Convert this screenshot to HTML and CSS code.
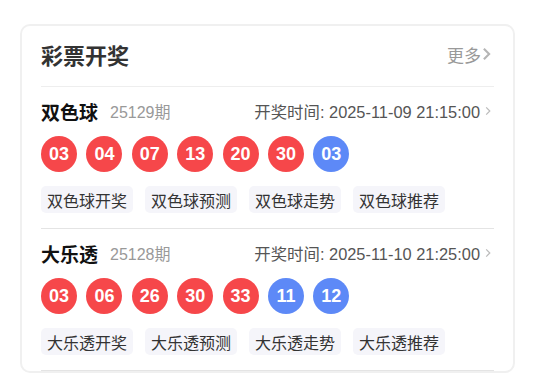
FILE: index.html
```html
<!DOCTYPE html>
<html lang="zh">
<head>
<meta charset="UTF-8">
<title>彩票开奖</title>
<link rel="stylesheet" href="styles.css">
</head>
<body>
  <section class="tarjeta">
    <div class="cabecera">
      <h2 class="titulo">彩票开奖</h2>
      <a class="mas">更多<svg class="flecha" viewBox="0 0 10 16" width="9" height="14"><path d="M2 2l6 6-6 6" fill="none" stroke="#b5b5b5" stroke-width="2.4"/></svg></a>
    </div>

    <div class="sorteo">
      <div class="fila">
        <span class="nombre">双色球</span>
        <span class="numero">25129期</span>
        <span class="hora">开奖时间: 2025-11-09 21:15:00<svg class="flecha-peq" viewBox="0 0 10 16" width="6" height="10"><path d="M2 2l6 6-6 6" fill="none" stroke="#bbb" stroke-width="2"/></svg></span>
      </div>
      <div class="bolas">
        <span class="bola roja">03</span>
        <span class="bola roja">04</span>
        <span class="bola roja">07</span>
        <span class="bola roja">13</span>
        <span class="bola roja">20</span>
        <span class="bola roja">30</span>
        <span class="bola azul">03</span>
      </div>
      <div class="etiquetas">
        <span class="etiqueta">双色球开奖</span>
        <span class="etiqueta">双色球预测</span>
        <span class="etiqueta">双色球走势</span>
        <span class="etiqueta">双色球推荐</span>
      </div>
    </div>

    <div class="sorteo">
      <div class="fila">
        <span class="nombre">大乐透</span>
        <span class="numero">25128期</span>
        <span class="hora">开奖时间: 2025-11-10 21:25:00<svg class="flecha-peq" viewBox="0 0 10 16" width="6" height="10"><path d="M2 2l6 6-6 6" fill="none" stroke="#bbb" stroke-width="2"/></svg></span>
      </div>
      <div class="bolas">
        <span class="bola roja">03</span>
        <span class="bola roja">06</span>
        <span class="bola roja">26</span>
        <span class="bola roja">30</span>
        <span class="bola roja">33</span>
        <span class="bola azul">11</span>
        <span class="bola azul">12</span>
      </div>
      <div class="etiquetas">
        <span class="etiqueta">大乐透开奖</span>
        <span class="etiqueta">大乐透预测</span>
        <span class="etiqueta">大乐透走势</span>
        <span class="etiqueta">大乐透推荐</span>
      </div>
    </div>
  </section>
</body>
</html>
```

FILE: styles.css
```css
* {
  padding: 0;
  margin: 0;
  box-sizing: border-box;
}

body {
  background: #fff;
  font-family: "Liberation Sans", "Noto Sans CJK SC", sans-serif;
  padding: 24px 0 0 20px;
}

.tarjeta {
  width: 495px;
  border: 2px solid #f0f0f0;
  border-radius: 10px;
  padding: 0 19px;
  background: #fff;
}

.cabecera {
  height: 61px;
  display: flex;
  align-items: center;
  justify-content: space-between;
  border-bottom: 1px solid #eeeeee;
  padding-bottom: 4px;
}

.titulo {
  font-size: 22px;
  font-weight: bold;
  color: #333;
}

.mas {
  font-size: 17px;
  color: #999;
  display: flex;
  align-items: center;
  gap: 1px;
  padding-right: 3px;
}

.sorteo {
  padding: 13px 0 15px;
  border-bottom: 1px solid #e4e4e4;
}

.fila {
  height: 22px;
  display: flex;
  align-items: center;
}

.nombre {
  font-size: 19px;
  font-weight: bold;
  color: #111;
}

.numero {
  font-size: 16px;
  color: #999;
  margin-left: 12px;
}

.hora {
  margin-left: auto;
  margin-right: 3px;
  font-size: 16.4px;
  color: #555;
  display: flex;
  align-items: center;
  gap: 5px;
}

.bolas {
  display: flex;
  gap: 9.4px;
  margin-top: 14px;
}

.bola {
  width: 36px;
  height: 36px;
  border-radius: 50%;
  color: #fff;
  font-size: 18px;
  font-weight: bold;
  display: flex;
  align-items: center;
  justify-content: center;
}

.roja {
  background: #f6474a;
}

.azul {
  background: #5d89f7;
}

.etiquetas {
  display: flex;
  gap: 12px;
  margin-top: 14px;
}

.etiqueta {
  height: 27px;
  padding: 0 6px;
  border-radius: 5px;
  background: #f5f5fa;
  color: #333;
  font-size: 16px;
  display: flex;
  align-items: center;
}
```
